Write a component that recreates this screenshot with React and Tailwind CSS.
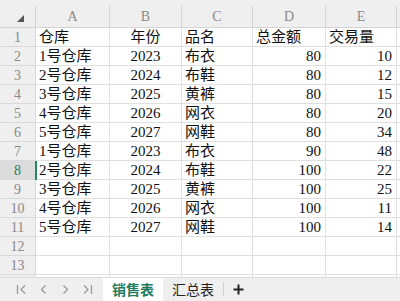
import React from "react";

const rows = [
    ["仓库", "年份", "品名", "总金额", "交易量"],
    ["1号仓库", "2023", "布衣", "80", "10"],
    ["2号仓库", "2024", "布鞋", "80", "12"],
    ["3号仓库", "2025", "黄裤", "80", "15"],
    ["4号仓库", "2026", "网衣", "80", "20"],
    ["5号仓库", "2027", "网鞋", "80", "34"],
    ["1号仓库", "2023", "布衣", "90", "48"],
    ["2号仓库", "2024", "布鞋", "100", "22"],
    ["3号仓库", "2025", "黄裤", "100", "25"],
    ["4号仓库", "2026", "网衣", "100", "11"],
    ["5号仓库", "2027", "网鞋", "100", "14"],
    ["", "", "", "", ""],
    ["", "", "", "", ""],
    ["", "", "", "", ""],
];

const cols = ["A", "B", "C", "D", "E"];
const grid = "grid grid-cols-[36px_74px_72px_71px_73px_71px_1fr]";
const font = { fontFamily: '"Liberation Serif", "Noto Sans CJK SC", serif' };

function Cell({ value, col }) {
    const align =
        col === 1 ? "justify-center" : col >= 3 ? "justify-end pr-[4px]" : "justify-start pl-[3px]";
    const text = col === 1 && value === "年份" ? "justify-center" : align;
    const isHeadText = col >= 3 && isNaN(Number(value));
    return (
        <div
            className={`flex h-[19px] items-center border-r border-b border-[#e0e0e0] text-[15px] leading-none text-[#111] ${
                isHeadText ? "justify-start pl-[3px]" : text
            }`}
        >
            {value}
        </div>
    );
}

export default function App() {
    return (
        <div className="flex h-[301px] w-[400px] flex-col overflow-hidden bg-white" style={font}>
            <div className="h-[277px] overflow-hidden">
                <div className="bg-[#efefef] pt-[6px]">
                    <div className={`${grid} h-[22px] border-b border-[#d4d4d4]`}>
                        <div className="relative border-r border-[#d4d4d4]">
                            <svg className="absolute left-[17px] top-[9px]" width="7" height="7" viewBox="0 0 7 7">
                                <polygon points="7,0 7,7 0,7" fill="#555" />
                            </svg>
                        </div>
                        {cols.map((c) => (
                            <div
                                key={c}
                                className="flex items-center justify-center border-r border-[#d4d4d4] text-[14px] text-[#8a8a8a]"
                            >
                                {c}
                            </div>
                        ))}
                        <div />
                    </div>
                </div>
                {rows.map((r, i) => {
                    const selected = i === 7;
                    return (
                        <div key={i} className={grid}>
                            <div
                                className={`relative flex h-[19px] items-center justify-center border-r border-b border-[#d9d9d9] text-[14px] ${
                                    selected ? "bg-[#dcdcdc] text-[#1e7d5e]" : "bg-[#efefef] text-[#888]"
                                }`}
                            >
                                {i + 1}
                                {selected && <div className="absolute -right-[2px] top-0 h-[19px] w-[2px] bg-[#1e8a5e]" />}
                            </div>
                            {r.map((v, j) => (
                                <Cell key={j} value={v} col={j} />
                            ))}
                            <div className="h-[19px] border-b border-[#e0e0e0]" />
                        </div>
                    );
                })}
            </div>
            <div
                className="flex h-[24px] items-stretch border-t border-[#dcdcdc] bg-[#efefef]"
                style={{ fontFamily: '"Noto Sans CJK SC", sans-serif' }}
            >
                <div className="flex w-[103px] items-center text-[#9a9a9a]">
                    <svg className="ml-[16px]" width="11" height="11" viewBox="0 0 11 11" fill="none" stroke="currentColor" strokeWidth="1.3">
                        <path d="M1.5 1v9M9 1.5 5 5.5l4 4" />
                    </svg>
                    <svg className="ml-[13px]" width="7" height="11" viewBox="0 0 7 11" fill="none" stroke="currentColor" strokeWidth="1.3">
                        <path d="M5.5 1.5 1.5 5.5l4 4" />
                    </svg>
                    <svg className="ml-[15px]" width="7" height="11" viewBox="0 0 7 11" fill="none" stroke="currentColor" strokeWidth="1.3">
                        <path d="m1.5 1.5 4 4-4 4" />
                    </svg>
                    <svg className="ml-[13px]" width="11" height="11" viewBox="0 0 11 11" fill="none" stroke="currentColor" strokeWidth="1.3">
                        <path d="M9.5 1v9M2 1.5l4 4-4 4" />
                    </svg>
                </div>
                <div className="flex w-[60px] items-center justify-center bg-white text-[14px] font-bold text-[#1e7d5e]">
                    销售表
                </div>
                <div className="flex w-[60px] items-center justify-center text-[14px] text-[#222]">汇总表</div>
                <div className="my-[5px] w-px bg-[#cfcfcf]" />
                <div className="flex items-center pl-[9px]">
                    <svg width="11" height="11" viewBox="0 0 11 11" stroke="#222" strokeWidth="2">
                        <path d="M5.5 0.5v10M0.5 5.5h10" />
                    </svg>
                </div>
            </div>
        </div>
    );
}
